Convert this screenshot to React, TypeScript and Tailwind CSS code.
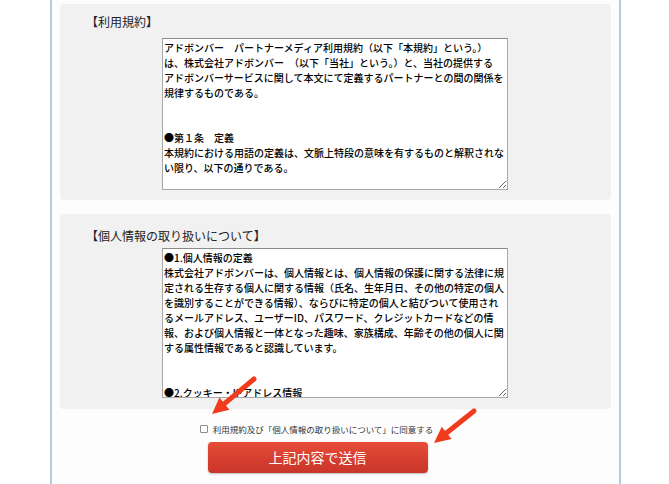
import { useState } from "react"

const TERMS = `アドボンバー　パートナーメディア利用規約（以下「本規約」という。）
は、株式会社アドボンバー　（以下「当社」という。）と、当社の提供する
アドボンバーサービスに関して本文にて定義するパートナーとの間の関係を
規律するものである。


●第１条　定義
本規約における用語の定義は、文脈上特段の意味を有するものと解釈されない限り、以下の通りである。
`

const PRIVACY = `●1.個人情報の定義
株式会社アドボンバーは、個人情報とは、個人情報の保護に関する法律に規定される生存する個人に関する情報（氏名、生年月日、その他の特定の個人を識別することができる情報）、ならびに特定の個人と結びついて使用されるメールアドレス、ユーザーID、パスワード、クレジットカードなどの情報、および個人情報と一体となった趣味、家族構成、年齢その他の個人に関する属性情報であると認識しています。


●2.クッキー・IPアドレス情報
当社は、サービスの利用状況を把握するためにクッキーおよびIPアドレス情報を取得することがあります。`

function Section({ title, text, first }: { title: string; text: string; first?: boolean }) {
  return (
    <div className={`bg-[#f1f1f1] rounded-[4px] ${first ? "pt-[10px] pb-[10px]" : "pt-[14px] pb-[11px]"}`}>
      <h3 className="pl-[26px] text-[12px] leading-[16px] text-[#222]">{title}</h3>
      <div className={`pl-[102px] ${first ? "mt-[8px]" : "mt-[4px]"}`}>
        <textarea
          readOnly
          defaultValue={text}
          className={`block w-[346px] ${first ? "h-[152px]" : "h-[150px]"} border border-[#a9a9a9] border-t-[#8a8a8a] bg-white px-[1px] py-[1px] text-[10px] leading-[15px] font-medium text-black overflow-hidden resize`}
          style={{ fontFamily: '"Noto Sans CJK JP", "Liberation Mono", monospace' }}
        />
      </div>
    </div>
  )
}

function Arrow({ x1, y1, x2, y2 }: { x1: number; y1: number; x2: number; y2: number }) {
  const ang = Math.atan2(y2 - y1, x2 - x1)
  const len = 18
  const w = 0.45
  const ax = x2 - len * Math.cos(ang - w)
  const ay = y2 - len * Math.sin(ang - w)
  const bx = x2 - len * Math.cos(ang + w)
  const by = y2 - len * Math.sin(ang + w)
  const sx = x2 - 12 * Math.cos(ang)
  const sy = y2 - 12 * Math.sin(ang)
  return (
    <g>
      <line x1={x1} y1={y1} x2={sx} y2={sy} stroke="#f03c1c" strokeWidth={5} strokeLinecap="round" />
      <polygon points={`${x2},${y2} ${ax},${ay} ${bx},${by}`} fill="#f03c1c" />
    </g>
  )
}

export default function App() {
  const [agree, setAgree] = useState(false)
  return (
    <div
      className="relative w-[669px] h-[484px] bg-white overflow-hidden"
      style={{ fontFamily: '"Noto Sans CJK JP", sans-serif' }}
    >
      <div className="ml-[50px] w-[571px] h-full border-x-2 border-[#b3cde3] bg-[#fdfdfd] px-[8px] pt-[4px]">
        <div className="flex flex-col gap-[14px]">
          <Section first title="【利用規約】" text={TERMS} />
          <Section title="【個人情報の取り扱いについて】" text={PRIVACY} />
        </div>
        <label className="mt-[14px] flex items-center justify-center gap-[5px] text-[8.5px] leading-[12px] text-[#333] pr-[38px]">
          <input
            type="checkbox"
            checked={agree}
            onChange={(e) => setAgree(e.target.checked)}
            className="appearance-none w-[8px] h-[8px] m-0 border border-[#8c8c8c] rounded-[1px] bg-white checked:bg-[#3b82f6]"
          />
          <span>利用規約及び「個人情報の取り扱いについて」に同意する</span>
        </label>
        <div className="mt-[7px] flex justify-center pr-[36px]">
          <button className="w-[220px] h-[31px] rounded-[4px] bg-gradient-to-b from-[#e64b36] to-[#c9352a] text-white text-[14px] shadow-[0_1px_2px_rgba(0,0,0,0.25)]">
            上記内容で送信
          </button>
        </div>
      </div>
      <svg className="absolute inset-0 pointer-events-none" width={669} height={484}>
        <Arrow x1={254} y1={379} x2={212} y2={414} />
        <Arrow x1={474} y1={411} x2={434} y2={443} />
      </svg>
    </div>
  )
}
